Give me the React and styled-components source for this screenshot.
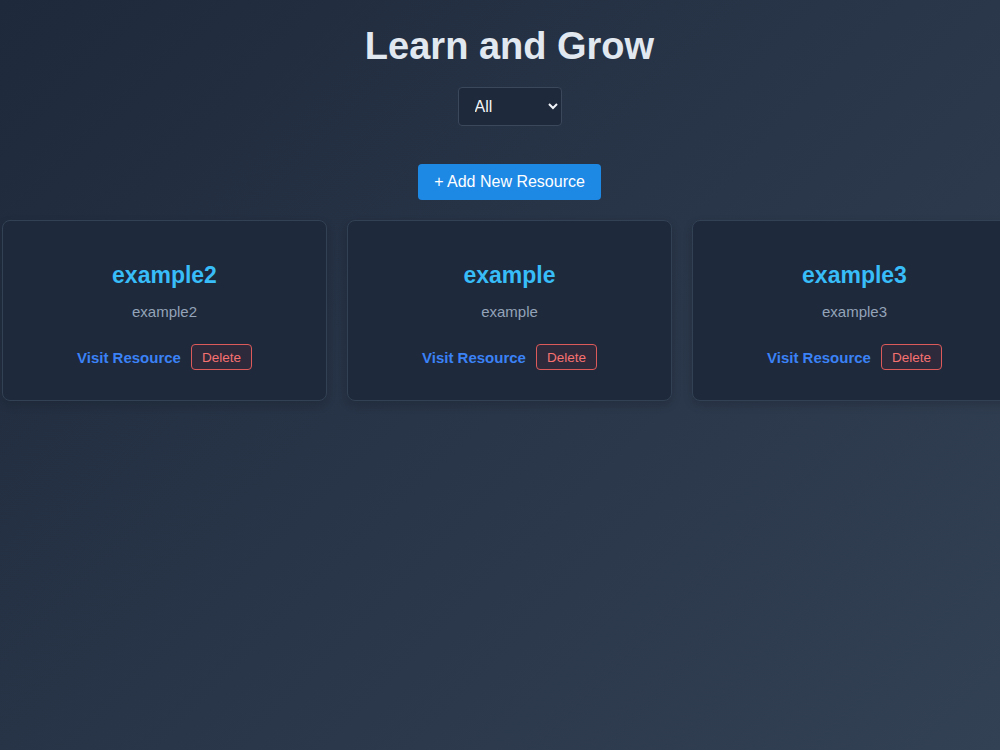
import React, { useState } from "react";
import styled, { createGlobalStyle } from "styled-components";

const GlobalStyle = createGlobalStyle`
  html, body {
    margin: 0;
    padding: 0;
    min-height: 100%;
  }
  body {
    font-family: "Liberation Sans", Arial, sans-serif;
    background: linear-gradient(135deg, #1e293b 0%, #334155 100%);
    background-attachment: fixed;
    min-height: 100vh;
    color: #e2e8f0;
    overflow: hidden;
  }
`;

const Page = styled.div`
  width: 1019px;
  min-height: 750px;
  display: flex;
  flex-direction: column;
  align-items: center;
  padding-top: 25px;
  box-sizing: border-box;
`;

const Title = styled.h1`
  margin: 0 0 19px;
  font-size: 38px;
  font-weight: 700;
  color: #e2e8f0;
`;

const FilterSelect = styled.select`
  width: 104px;
  height: 39px;
  padding: 0 10px 0 12px;
  font-family: inherit;
  font-size: 16px;
  color: #f1f5f9;
  background: #1e293b;
  border: 1px solid #3b475a;
  border-radius: 4px;
  margin-bottom: 38px;
`;

const AddButton = styled.button`
  height: 36px;
  padding: 0 16px;
  font-family: inherit;
  font-size: 16px;
  color: #ffffff;
  background: #1e88e5;
  border: none;
  border-radius: 4px;
  cursor: pointer;
  margin-bottom: 20px;
`;

const Grid = styled.div`
  width: 100%;
  box-sizing: border-box;
  padding: 0 2px;
  display: grid;
  grid-template-columns: repeat(3, 1fr);
  gap: 20px;
`;

const Card = styled.div`
  background: #1e293b;
  border: 1px solid #334155;
  border-radius: 8px;
  height: 181px;
  box-sizing: border-box;
  display: flex;
  flex-direction: column;
  align-items: center;
  padding-top: 41px;
  box-shadow: 0 4px 10px rgba(0, 0, 0, 0.15);
`;

const CardTitle = styled.h3`
  margin: 0 0 14px;
  font-size: 23px;
  font-weight: 700;
  color: #38bdf8;
`;

const CardText = styled.p`
  margin: 0 0 24px;
  font-size: 15px;
  color: #94a3b8;
`;

const Actions = styled.div`
  display: flex;
  align-items: center;
  gap: 10px;
`;

const VisitLink = styled.a`
  font-size: 15px;
  font-weight: 700;
  color: #3b82f6;
  text-decoration: none;
`;

const DeleteButton = styled.button`
  height: 26px;
  padding: 0 10px;
  font-family: inherit;
  font-size: 13.5px;
  color: #f87171;
  background: rgba(239, 68, 68, 0.08);
  border: 1px solid #dc5a5a;
  border-radius: 4px;
  cursor: pointer;
`;

const resources = [
  { id: 2, title: "example2", description: "example2" },
  { id: 1, title: "example", description: "example" },
  { id: 3, title: "example3", description: "example3" },
];

export default function App() {
  const [filter, setFilter] = useState("All");
  const [items, setItems] = useState(resources);

  return (
    <>
      <GlobalStyle />
      <Page>
        <Title>Learn and Grow</Title>
        <FilterSelect value={filter} onChange={(e) => setFilter(e.target.value)}>
          <option>All</option>
          <option>Articles</option>
          <option>Videos</option>
        </FilterSelect>
        <AddButton>+ Add New Resource</AddButton>
        <Grid>
          {items.map((item) => (
            <Card key={item.id}>
              <CardTitle>{item.title}</CardTitle>
              <CardText>{item.description}</CardText>
              <Actions>
                <VisitLink href="#">Visit Resource</VisitLink>
                <DeleteButton
                  onClick={() => setItems(items.filter((i) => i.id !== item.id))}
                >
                  Delete
                </DeleteButton>
              </Actions>
            </Card>
          ))}
        </Grid>
      </Page>
    </>
  );
}
